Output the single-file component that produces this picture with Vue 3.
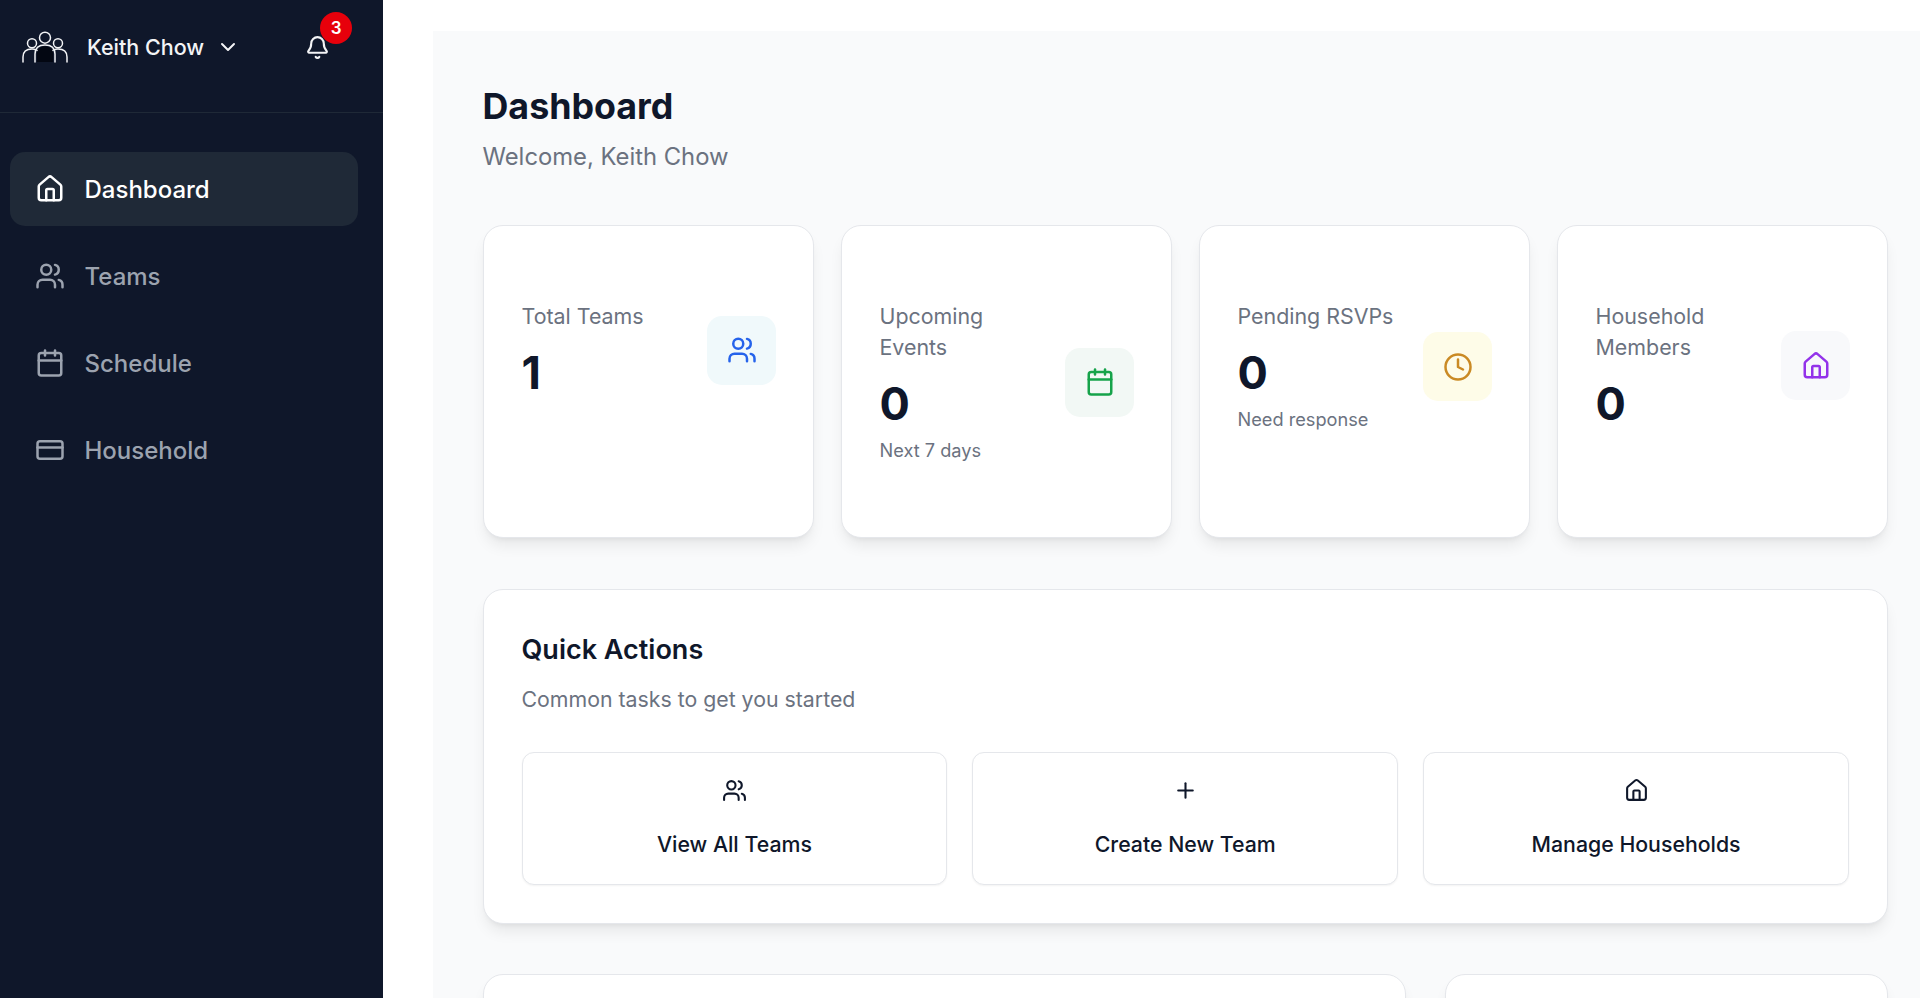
<template>
  <div class="app">
    <aside class="sidebar">
      <div class="side-head">
        <svg class="logo" viewBox="0 0 46 32" fill="none" stroke="currentColor" stroke-width="1.5" stroke-linecap="round">
          <circle cx="23" cy="6.700" r="5.500" />
          <circle cx="10" cy="12.300" r="4.500" />
          <circle cx="36" cy="12.300" r="4.500" />
          <path d="M1 31v-5c0-5 3-8 9-8 2 0 4 .5 5.500 1.500" />
          <path d="M45 31v-5c0-5-3-8-9-8-2 0-4 .5-5.500 1.500" />
          <path d="M13 31v-8c0-6 4-9 10-9s10 3 10 9v8" />
          <path d="M15 31v-8c0-5 3-7.500 8-7.500s8 2.500 8 7.500v8z" fill="#030712" stroke="none" />
        </svg>
        <span class="user-name">Keith Chow</span>
        <svg class="chev" viewBox="0 0 24 24" fill="none" stroke="currentColor" stroke-width="2" stroke-linecap="round" stroke-linejoin="round">
          <path d="m6 9 6 6 6-6" />
        </svg>
        <div class="bell-wrap">
          <svg class="bell" viewBox="0 0 24 24" fill="none" stroke="currentColor" stroke-width="2" stroke-linecap="round" stroke-linejoin="round">
            <path d="M10.268 21a2 2 0 0 0 3.464 0" />
            <path d="M3.262 15.326A1 1 0 0 0 4 17h16a1 1 0 0 0 .74-1.673C19.41 13.956 18 12.499 18 8A6 6 0 0 0 6 8c0 4.499-1.411 5.956-2.738 7.326" />
          </svg>
          <span class="badge">3</span>
        </div>
      </div>
      <nav class="nav">
        <a v-for="item in navItems" :key="item.label" class="nav-item" :class="{ active: item.active }">
          <svg class="nav-icon" viewBox="0 0 24 24" fill="none" stroke="currentColor" stroke-width="2" stroke-linecap="round" stroke-linejoin="round" v-html="icons[item.icon]"></svg>
          <span>{{ item.label }}</span>
        </a>
      </nav>
    </aside>

    <main class="main">
      <div class="content">
        <h1 class="page-title">Dashboard</h1>
        <p class="page-sub">Welcome, Keith Chow</p>

        <div class="stats">
          <div v-for="s in stats" :key="s.label" class="card stat">
            <div class="stat-row">
              <div class="stat-text">
                <div class="stat-label">{{ s.label }}</div>
                <div class="stat-value">{{ s.value }}</div>
                <div v-if="s.note" class="stat-note">{{ s.note }}</div>
              </div>
              <div class="stat-icon" :style="{ background: s.bg, color: s.color }">
                <svg viewBox="0 0 24 24" fill="none" stroke="currentColor" stroke-width="2" stroke-linecap="round" stroke-linejoin="round" v-html="icons[s.icon]"></svg>
              </div>
            </div>
          </div>
        </div>

        <section class="card quick">
          <h2 class="quick-title">Quick Actions</h2>
          <p class="quick-sub">Common tasks to get you started</p>
          <div class="actions">
            <button v-for="a in actions" :key="a.label" class="action">
              <svg viewBox="0 0 24 24" fill="none" stroke="currentColor" stroke-width="2" stroke-linecap="round" stroke-linejoin="round" v-html="icons[a.icon]"></svg>
              <span>{{ a.label }}</span>
            </button>
          </div>
        </section>

        <div class="bottom">
          <div class="card bottom-card"></div>
          <div class="card bottom-card"></div>
        </div>
      </div>
    </main>
  </div>
</template>

<script setup>
const icons = {
  home: '<path d="M15 21v-8a1 1 0 0 0-1-1h-4a1 1 0 0 0-1 1v8"/><path d="M3 10a2 2 0 0 1 .709-1.528l7-5.999a2 2 0 0 1 2.582 0l7 5.999A2 2 0 0 1 21 10v9a2 2 0 0 1-2 2H5a2 2 0 0 1-2-2z"/>',
  users: '<path d="M16 21v-2a4 4 0 0 0-4-4H6a4 4 0 0 0-4 4v2"/><path d="M16 3.128a4 4 0 0 1 0 7.744"/><path d="M22 21v-2a4 4 0 0 0-3-3.87"/><circle cx="9" cy="7" r="4"/>',
  calendar: '<path d="M8 2v4"/><path d="M16 2v4"/><rect width="18" height="18" x="3" y="4" rx="2"/><path d="M3 10h18"/>',
  card: '<rect width="20" height="14" x="2" y="5" rx="2"/><line x1="2" x2="22" y1="10" y2="10"/>',
  clock: '<circle cx="12" cy="12" r="10"/><polyline points="12 6 12 12 16 14"/>',
  plus: '<path d="M5 12h14"/><path d="M12 5v14"/>',
}

const navItems = [
  { label: 'Dashboard', icon: 'home', active: true },
  { label: 'Teams', icon: 'users' },
  { label: 'Schedule', icon: 'calendar' },
  { label: 'Household', icon: 'card' },
]

const stats = [
  { label: 'Total Teams', value: '1', icon: 'users', bg: '#f0f9fb', color: '#2563eb' },
  { label: 'Upcoming Events', value: '0', note: 'Next 7 days', icon: 'calendar', bg: '#f2f8f5', color: '#16a34a' },
  { label: 'Pending RSVPs', value: '0', note: 'Need response', icon: 'clock', bg: '#fefce8', color: '#ca8a24' },
  { label: 'Household Members', value: '0', icon: 'home', bg: '#f8f9fb', color: '#9333ea' },
]

const actions = [
  { label: 'View All Teams', icon: 'users' },
  { label: 'Create New Team', icon: 'plus' },
  { label: 'Manage Households', icon: 'home' },
]
</script>

<style>
html, body {
  margin: 0;
  background: #fff;
}
</style>

<style scoped>
.app {
  display: flex;
  height: 998px;
  overflow: hidden;
  font-family: Inter, "Liberation Sans", sans-serif;
  color: #0f172a;
}

.sidebar {
  width: 383px;
  flex-shrink: 0;
  background: #0f172a;
}

.side-head {
  height: 113px;
  box-sizing: border-box;
  border-bottom: 1px solid #1f2937;
  display: flex;
  align-items: center;
  padding: 0 0 18px 22px;
  color: #f3f4f6;
}

.logo {
  width: 46px;
  height: 32px;
}

.user-name {
  margin-left: 19px;
  font-size: 21.500px;
  font-weight: 500;
}

.chev {
  width: 24px;
  height: 24px;
  margin-left: 12px;
}

.bell-wrap {
  position: relative;
  margin-left: 65px;
  display: flex;
}

.bell {
  width: 25px;
  height: 25px;
}

.badge {
  position: absolute;
  top: -23px;
  left: 15px;
  width: 32px;
  height: 32px;
  border-radius: 50%;
  background: #e7000b;
  color: #fff;
  font-size: 17px;
  font-weight: 600;
  display: flex;
  align-items: center;
  justify-content: center;
}

.nav {
  padding: 39px 25px 0 9.500px;
  display: flex;
  flex-direction: column;
  gap: 13px;
}

.nav-item {
  height: 74px;
  border-radius: 15px;
  display: flex;
  align-items: center;
  gap: 20px;
  padding-left: 25px;
  font-size: 24px;
  font-weight: 500;
  color: #9ca3af;
}

.nav-item.active {
  background: #1f2937;
  color: #fff;
}

.nav-icon {
  width: 30px;
  height: 30px;
}

.main {
  flex: 1;
  min-width: 0;
  padding: 31px 0 0 50px;
}

.content {
  height: 100%;
  box-sizing: border-box;
  background: #f9fafb;
  padding: 50px 32px 0 49.500px;
}

.page-title {
  margin: 0;
  font-size: 35.800px;
  line-height: 51px;
  font-weight: 700;
}

.page-sub {
  margin: 6px 0 0;
  font-size: 23.800px;
  line-height: 38px;
  color: #6b7280;
}

.card {
  background: #fff;
  border: 1px solid #e5e7eb;
  box-sizing: border-box;
  border-radius: 20px;
  box-shadow: 0 10px 15px -3px rgba(0, 0, 0, 0.08), 0 4px 6px -4px rgba(0, 0, 0, 0.08);
}

.stats {
  margin-top: 49px;
  display: grid;
  grid-template-columns: repeat(4, 1fr);
  gap: 26.500px;
}

.stat {
  height: 313px;
  padding: 75px 37px 75px 38px;
}

.stat-row {
  display: flex;
  justify-content: space-between;
  align-items: center;
  gap: 20px;
}

.stat-text {
  min-width: 0;
}

.stat-label {
  font-size: 21.400px;
  line-height: 31px;
  font-weight: 400;
  color: #6b7280;
}

.stat-value {
  margin-top: 15px;
  font-size: 45px;
  line-height: 52px;
  font-weight: 700;
}

.stat-note {
  margin-top: 7px;
  font-size: 18.200px;
  line-height: 26px;
  color: #6b7280;
}

.stat-icon {
  width: 69px;
  height: 69px;
  flex-shrink: 0;
  border-radius: 15px;
  display: flex;
  align-items: center;
  justify-content: center;
}

.stat-icon svg {
  width: 30px;
  height: 30px;
}

.quick {
  margin-top: 51px;
  height: 335px;
  padding: 41px 38px;
}

.quick-title {
  margin: 0;
  font-size: 27px;
  line-height: 38px;
  font-weight: 600;
}

.quick-sub {
  margin: 15px 0 0;
  font-size: 21.300px;
  line-height: 31px;
  color: #6b7280;
}

.actions {
  margin-top: 37px;
  display: grid;
  grid-template-columns: repeat(3, 1fr);
  gap: 25px;
}

.action {
  height: 133px;
  background: #fff;
  border: 1px solid #e5e7eb;
  border-radius: 12px;
  box-shadow: 0 1px 2px rgba(0, 0, 0, 0.05);
  font-family: inherit;
  font-size: 21.300px;
  font-weight: 500;
  color: #0f172a;
  display: flex;
  flex-direction: column;
  align-items: center;
  justify-content: center;
  gap: 28px;
  padding: 0 0 3px;
}

.action svg {
  width: 25px;
  height: 25px;
}

.bottom {
  margin-top: 50px;
  display: grid;
  grid-template-columns: 923px 443px;
  gap: 39px;
}

.bottom-card {
  height: 200px;
}
</style>
